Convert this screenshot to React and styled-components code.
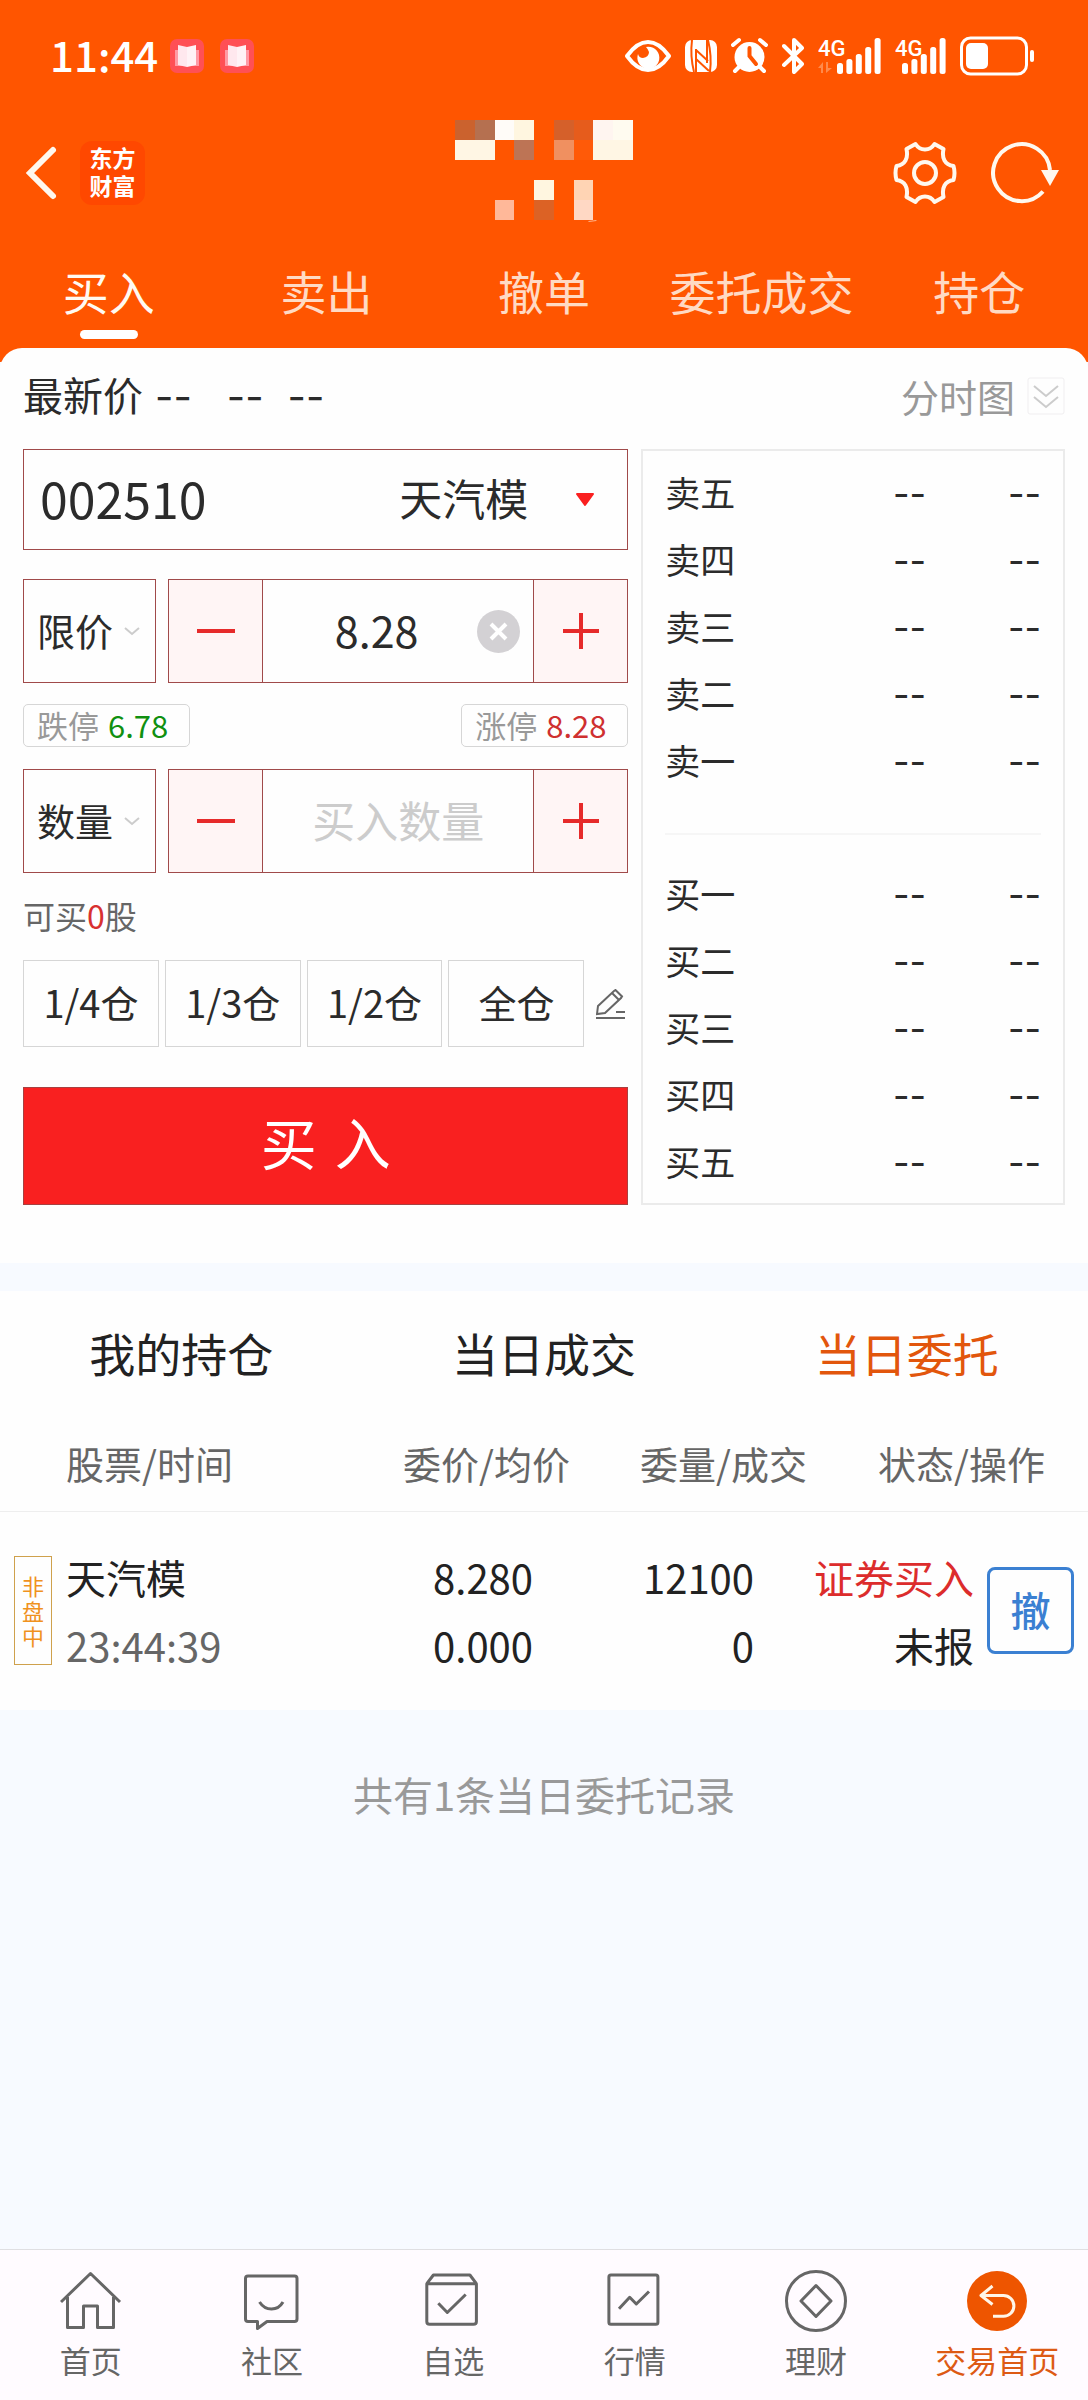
import React, { useState } from 'react';
import styled, { createGlobalStyle } from 'styled-components';

const topTabs = ['买入', '卖出', '撤单', '委托成交', '持仓'];
const sellLevels = ['卖五', '卖四', '卖三', '卖二', '卖一'];
const buyLevels = ['买一', '买二', '买三', '买四', '买五'];
const positions = ['1/4仓', '1/3仓', '1/2仓', '全仓'];
const orderTabs = ['我的持仓', '当日成交', '当日委托'];

const orders = [
  {
    id: 1,
    tag: '非盘中',
    name: '天汽模',
    time: '23:44:39',
    price: '8.280',
    average: '0.000',
    amount: '12100',
    done: '0',
    side: '证券买入',
    status: '未报',
  },
];

// [列, 行, 颜色]
const mosaicCells = [
  [0, 0, '#cb622e'],
  [1, 0, '#b57050'],
  [2, 0, '#fffcf8'],
  [3, 0, '#fff6e0'],
  [5, 0, '#d5602a'],
  [6, 0, '#e65c1c'],
  [7, 0, '#fff5f0'],
  [8, 0, '#fffbf0'],
  [0, 1, '#fff6e4'],
  [1, 1, '#fff6e4'],
  [3, 1, '#bd7455'],
  [5, 1, '#f09060'],
  [6, 1, '#ff5a08'],
  [7, 1, '#fff6e4'],
  [8, 1, '#fff6e4'],
  [4, 3, '#fff6e0'],
  [6, 3, '#ffd4b4'],
  [2, 4, '#ffb899'],
  [4, 4, '#dc6225'],
  [6, 4, '#ffd8c4'],
];

const navItems = [
  {
    label: '首页',
    icon: (
      <path d="M1 32 30.5 3.5 60 32M7.5 27V57.5H23.5V36H37.5V57.5H53.5V27" />
    ),
  },
  {
    label: '社区',
    icon: (
      <>
        <path d="M7 6H53.5Q56 6 56 8.5V49Q56 51.500 53.5 51.5H26L16.5 58.5V51.5H7Q4.5 51.5 4.5 49V8.5Q4.5 6 7 6Z" />
        <path d="M18.5 32Q23 39 30.5 39T42 32" />
      </>
    ),
  },
  {
    label: '自选',
    icon: (
      <>
        <path d="M4.8 13.7H54.4V51.5Q54.4 54.3 51.5 54.3H7.6Q4.8 54.3 4.8 51.5ZM4.8 13.7 11.4 5H47.9L54.4 13.7" />
        <path d="M16.3 33.3 25.3 42.5 43.7 24.5" />
      </>
    ),
  },
  {
    label: '行情',
    icon: (
      <>
        <rect x="4.9" y="5" width="49" height="49.3" rx="2" />
        <path d="M15 38.7 25.7 27.3 32.3 34 45 21.5" />
      </>
    ),
  },
  {
    label: '理财',
    icon: (
      <>
        <circle cx="31" cy="31" r="29.5" />
        <path d="M31 15.5 46 31 31 46.5 16 31Z" />
      </>
    ),
  },
  {
    label: '交易首页',
    active: true,
    icon: (
      <>
        <circle cx="31" cy="31" r="30" fill="#ee5500" stroke="none" />
        <path
          d="M26.5 16 15 25.5 26.5 34.5M15 25.5H37.5A10.4 10.4 0 0 1 37.5 46.3H27"
          stroke="#fff6e8"
        />
      </>
    ),
  },
];

function BookIcon() {
  return (
    <svg width="34" height="34" viewBox="0 0 34 34" aria-hidden="true">
      <rect width="34" height="34" rx="7" fill="#ff5055" />
      <path d="M5 11H29V27H5Z" fill="#ff9aa5" />
      <path d="M8 6 17 8V28L8 26Z" fill="#ffe8ee" />
      <path d="M26 6 17 8V28L26 26Z" fill="#fff3f6" />
    </svg>
  );
}

function SignalIcon({ bars, width, data }) {
  return (
    <svg
      width={width}
      height="44"
      viewBox={`0 -3 ${width} 44`}
      fill="#fff"
      fontFamily="Roboto, sans-serif"
    >
      <text x="0" y="19" fontSize="22" fontWeight="500">
        4G
      </text>
      {data && (
        <path d="M0 31 5 25V36H3V31ZM8 25H10V31H14L8 36Z" fill="#ff8a4c" />
      )}
      {[11, 15, 20, 27, 36].map((height, i) => (
        <rect
          key={height}
          x={bars + i * 9.4}
          y={37 - height}
          width="6"
          height={height}
          rx="2.5"
        />
      ))}
    </svg>
  );
}

function StatusIcons() {
  return (
    <StatusGroup $gap={14}>
      <svg width="46" height="38" viewBox="0 0 46 38" fill="none">
        <path
          d="M2 19Q12 5 23 5T44 19Q34 33 23 33T2 19Z"
          stroke="#fff"
          strokeWidth="4"
          strokeLinejoin="round"
        />
        <path
          d="M21 10A11 11 0 1 1 13 17Q14 21 18 21 24 20 24 15 23 12 21 10Z"
          fill="#fff"
        />
      </svg>
      <svg width="32" height="38" viewBox="0 0 32 38">
        <rect y="3" width="32" height="32" rx="7" fill="#fff" />
        <path
          d="M7 3Q5 19 9 35M25 35Q27 19 23 3M11 12V35M11 13 23 24M11 22 24 34M22 3V26"
          stroke="#ff5500"
          strokeWidth="2"
          fill="none"
        />
      </svg>
      <svg width="37" height="38" viewBox="0 0 37 38" fill="none">
        <circle cx="18.5" cy="20" r="15" fill="#fff" />
        <path
          d="M2 8 8 3M35 8 29 3M8 30 4 34M29 30 33 34"
          stroke="#fff"
          strokeWidth="4"
          strokeLinecap="round"
        />
        <path
          d="M18.5 11V19L25 27"
          stroke="#ff5500"
          strokeWidth="4"
          strokeLinecap="round"
        />
      </svg>
      <svg width="22" height="38" viewBox="0 0 22 38" fill="none">
        <path
          d="M2 9 20 27 12 35V3L20 11 2 28"
          stroke="#fff"
          strokeWidth="4"
          strokeLinejoin="round"
          strokeLinecap="round"
        />
      </svg>
      <SignalIcon bars={19} width={63} data />
      <SignalIcon bars={7} width={51} />
      <svg width="75" height="40" viewBox="0 0 75 40" fill="none">
        <rect
          x="1.5"
          y="2"
          width="65"
          height="36"
          rx="9"
          stroke="#fff"
          strokeWidth="3"
        />
        <rect x="6" y="7" width="22" height="26" rx="5" fill="#fff" />
        <rect x="70" y="14" width="4" height="12" rx="2" fill="#fff" />
      </svg>
    </StatusGroup>
  );
}

function Mosaic() {
  return (
    <svg
      width="178"
      height="106"
      viewBox="0 0 180 106"
      preserveAspectRatio="none"
      aria-hidden="true"
    >
      {mosaicCells.map(([col, row, color]) => (
        <rect
          key={`${col}-${row}`}
          x={col * 20}
          y={row * 20}
          width="20"
          height="20"
          fill={color}
          shapeRendering="crispEdges"
        />
      ))}
      <path d="M135 101.5 143 100.5" stroke="#ffb48c" />
    </svg>
  );
}

function GearIcon() {
  return (
    <svg width="64" height="64" viewBox="0 0 64 64" fill="none">
      <path
        d="M22.5 3Q26 8.5 32 8.5T41.5 3L50.5 8Q49 15 51.5 19.5 54 24 60.5 25Q62.5 32 60.5 39 54 40 51.5 44.5 49 49 50.5 56L41.5 61Q38 55.5 32 55.5T22.5 61L13.5 56Q15 49 12.5 44.5 10 40 3.5 39 1.5 32 3.5 25 10 24 12.5 19.5 15 15 13.5 8Z"
        stroke="#fff8ee"
        strokeWidth="4"
        strokeLinejoin="round"
      />
      <circle cx="32" cy="32" r="11" stroke="#fff8ee" strokeWidth="4" />
    </svg>
  );
}

function RefreshIcon() {
  return (
    <svg width="68" height="64" viewBox="0 0 68 64" fill="none">
      <path
        d="M52 50.5A28.5 28.5 0 1 1 59 29"
        stroke="#fff8ee"
        strokeWidth="4"
      />
      <path d="M50 29H68L59 45Z" fill="#fff8ee" />
    </svg>
  );
}

function SmallChevron() {
  return (
    <ChevronStyle viewBox="0 0 16 10" aria-hidden="true">
      <path d="M1 2 8 8 15 2" fill="none" stroke="#ccc" strokeWidth="2" />
    </ChevronStyle>
  );
}

function SignButton({ plus, label }) {
  return (
    <StepButton type="button" aria-label={label}>
      <svg width="38" height="38" viewBox="0 0 38 38">
        <path
          d={plus ? 'M1 19H37M19 1V37' : 'M0 19H38'}
          stroke="#e62a2a"
          strokeWidth="4"
        />
      </svg>
    </StepButton>
  );
}

function Levels({ rows, label }) {
  return (
    <LevelTable aria-label={label}>
      <tbody>
        {rows.map((row) => (
          <LevelRow key={row}>
            <LevelName scope="row">{row}</LevelName>
            <LevelValue>--</LevelValue>
            <LevelValue>--</LevelValue>
          </LevelRow>
        ))}
      </tbody>
    </LevelTable>
  );
}

function OrderForm() {
  const [code, setCode] = useState('002510');
  const [price, setPrice] = useState('8.28');
  const [amount, setAmount] = useState('');

  return (
    <Form onSubmit={(e) => e.preventDefault()}>
      <CodeBox>
        <CodeInput
          aria-label="股票代码"
          value={code}
          onChange={(e) => setCode(e.target.value)}
        />
        <StockName>天汽模</StockName>
        <PlainButton type="button" aria-label="选择股票">
          <svg width="20" height="14" viewBox="0 0 20 14">
            <path
              d="M2 1H18L10 12Z"
              fill="#fa2020"
              stroke="#fa2020"
              strokeWidth="2"
              strokeLinejoin="round"
            />
          </svg>
        </PlainButton>
      </CodeBox>

      <FieldRow>
        <SelectBox>
          <Select aria-label="委托方式">
            <option>限价</option>
          </Select>
          <SmallChevron />
        </SelectBox>
        <Stepper>
          <SignButton label="减价" />
          <StepField>
            <StepInput
              aria-label="委托价格"
              value={price}
              onChange={(e) => setPrice(e.target.value)}
            />
            <PlainButton
              type="button"
              aria-label="清空"
              onClick={() => setPrice('')}
            >
              <svg width="43" height="43" viewBox="0 0 43 43">
                <circle cx="21.5" cy="21.5" r="21.5" fill="#d3d1d4" />
                <path
                  d="M14 14 29 29M29 14 14 29"
                  stroke="#fff"
                  strokeWidth="4"
                />
              </svg>
            </PlainButton>
          </StepField>
          <SignButton plus label="加价" />
        </Stepper>
      </FieldRow>

      <LimitRow>
        <LimitPill>
          跌停<LimitValue $color="#109010">6.78</LimitValue>
        </LimitPill>
        <LimitPill>
          涨停<LimitValue $color="#cf3030">8.28</LimitValue>
        </LimitPill>
      </LimitRow>

      <FieldRow>
        <SelectBox>
          <Select aria-label="委托单位">
            <option>数量</option>
          </Select>
          <SmallChevron />
        </SelectBox>
        <Stepper>
          <SignButton label="减少数量" />
          <StepField>
            <StepInput
              aria-label="买入数量"
              placeholder="买入数量"
              value={amount}
              onChange={(e) => setAmount(e.target.value)}
            />
          </StepField>
          <SignButton plus label="增加数量" />
        </Stepper>
      </FieldRow>

      <Available>
        可买<em>0</em>股
      </Available>

      <PositionRow>
        {positions.map((item) => (
          <PositionButton key={item} type="button">
            {item}
          </PositionButton>
        ))}
        <EditButton type="button" aria-label="编辑仓位">
          <svg
            width="30"
            height="30"
            viewBox="0 0 30 30"
            fill="none"
            stroke="#666"
            strokeWidth="2"
          >
            <path d="M0 29H29M20 23H29M1 25 2 17 18 2 19.5 1 26 7.5 25 9 9 24ZM16 4 23 11" />
          </svg>
        </EditButton>
      </PositionRow>

      <BuyButton type="submit">
        <span>买</span>
        <span>入</span>
      </BuyButton>
    </Form>
  );
}

function App() {
  return (
    <Page>
      <GlobalStyle />
      <Header>
        <StatusBar>
          <StatusGroup $gap={16}>
            <Clock>11:44</Clock>
            <BookIcon />
            <BookIcon />
          </StatusGroup>
          <StatusIcons />
        </StatusBar>
        <TitleBar>
          <TitleLeft>
            <PlainButton type="button" aria-label="返回">
              <svg width="34" height="56" viewBox="0 0 34 56" fill="none">
                <path
                  d="M29 5 6 28 29 51"
                  stroke="#fff8ee"
                  strokeWidth="6"
                  strokeLinecap="round"
                />
              </svg>
            </PlainButton>
            <Logo>
              东方
              <br />
              财富
            </Logo>
          </TitleLeft>
          <Mosaic />
          <TitleRight>
            <PlainButton type="button" aria-label="设置">
              <GearIcon />
            </PlainButton>
            <PlainButton type="button" aria-label="刷新">
              <RefreshIcon />
            </PlainButton>
          </TitleRight>
        </TitleBar>
        <TopTabs>
          {topTabs.map((tab, i) => (
            <TopTab key={tab} type="button" $active={i === 0}>
              {tab}
            </TopTab>
          ))}
        </TopTabs>
      </Header>

      <TradeCard>
        <QuoteRow>
          <Quote>
            最新价
            <Dash $space={12}>--</Dash>
            <Dash $space={35}>--</Dash>
            <Dash $space={24}>--</Dash>
          </Quote>
          <ChartToggle type="button">
            分时图
            <svg width="38" height="38" viewBox="0 0 38 38" fill="none">
              <rect
                x="1"
                y="1"
                width="36"
                height="36"
                rx="2"
                stroke="#f0eef0"
              />
              <path
                d="M7 9 19 19 31 9M7 20 19 30 31 20"
                stroke="#ccc"
                strokeWidth="2"
              />
            </svg>
          </ChartToggle>
        </QuoteRow>
        <TradeBody>
          <OrderForm />
          <OrderBook>
            <Levels rows={sellLevels} label="卖盘" />
            <Divider />
            <Levels rows={buyLevels} label="买盘" />
          </OrderBook>
        </TradeBody>
      </TradeCard>

      <OrderSection>
        <OrderTabs>
          {orderTabs.map((tab, i) => (
            <OrderTab key={tab} type="button" $active={i === 2}>
              {tab}
            </OrderTab>
          ))}
        </OrderTabs>
        <OrderTable>
          <colgroup>
            <Col $width={66} />
            <col />
            <Col $width={237} />
            <Col $width={237} />
            <Col $width={167} />
            <Col $width={114} />
          </colgroup>
          <thead>
            <tr>
              <td />
              <HeadCell $align="left">股票/时间</HeadCell>
              <HeadCell>委价/均价</HeadCell>
              <HeadCell>委量/成交</HeadCell>
              <HeadCell colSpan={2} $right={43}>
                状态/操作
              </HeadCell>
            </tr>
          </thead>
          <tbody>
            {orders.map((order) => (
              <tr key={order.id}>
                <OrderCell>
                  <SessionTag>{order.tag}</SessionTag>
                </OrderCell>
                <OrderCell $align="left">
                  {order.name}
                  <Muted>{order.time}</Muted>
                </OrderCell>
                <OrderCell $right={37}>
                  {order.price}
                  <br />
                  {order.average}
                </OrderCell>
                <OrderCell $right={53}>
                  {order.amount}
                  <br />
                  {order.done}
                </OrderCell>
                <OrderCell>
                  <Side>{order.side}</Side>
                  {order.status}
                </OrderCell>
                <OrderCell $right={14}>
                  <CancelButton type="button">撤</CancelButton>
                </OrderCell>
              </tr>
            ))}
          </tbody>
        </OrderTable>
      </OrderSection>

      <Summary>共有1条当日委托记录</Summary>

      <BottomNav>
        {navItems.map((item) => (
          <NavLink key={item.label} href="#" $active={item.active}>
            <NavIcon viewBox="0 0 62 62">{item.icon}</NavIcon>
            {item.label}
          </NavLink>
        ))}
      </BottomNav>
    </Page>
  );
}

const GlobalStyle = createGlobalStyle`
  * {
    box-sizing: border-box;
  }

  body {
    margin: 0;
    background: #f7faff;
    color: #2b2b2b;
    font-family: 'Noto Sans CJK SC', 'Noto Sans', sans-serif;
  }

  button, input, select {
    padding: 0;
    border: 0;
    border-radius: 0;
    background: none;
    color: inherit;
    font-family: inherit;
  }

  svg {
    display: block;
    flex-shrink: 0;
  }
`;

const Page = styled.div`
  display: flex;
  flex-direction: column;
  min-height: 100vh;
`;

const PlainButton = styled.button`
  flex-shrink: 0;
  cursor: pointer;
`;

const Header = styled.header`
  padding-bottom: 23px;
  background: #ff5500;
  color: #fff;
`;

const StatusBar = styled.div`
  display: flex;
  align-items: center;
  justify-content: space-between;
  height: 112px;
  padding: 0 53px 0 50px;
`;

const StatusGroup = styled.div`
  display: flex;
  align-items: center;
  gap: ${({ $gap }) => $gap}px;
`;

const Clock = styled.time`
  margin-right: -4px;
  padding-bottom: 4px;
  font-size: 42px;
  font-weight: 500;
  line-height: 56px;
`;

const TitleBar = styled.div`
  display: grid;
  grid-template-columns: 1fr auto 1fr;
  align-items: center;
  height: 122px;
  padding: 0 24px;
`;

const TitleLeft = styled.div`
  display: flex;
  align-items: center;
  gap: 22px;
`;

const TitleRight = styled.div`
  display: flex;
  justify-content: flex-end;
  gap: 34px;
  padding-right: 5px;
`;

const Logo = styled.div`
  width: 65px;
  padding: 4px 0;
  border-radius: 12px;
  background: #ff4800;
  font-family: 'Liberation Sans', 'Noto Sans CJK SC', sans-serif;
  font-size: 23px;
  font-weight: 700;
  line-height: 28px;
  text-align: center;
`;

const TopTabs = styled.nav`
  display: grid;
  grid-template-columns: repeat(5, 1fr);
`;

const TopTab = styled.button`
  padding-top: 26px;
  color: ${({ $active }) => ($active ? '#fffaf2' : '#ffdac4')};
  font-size: 46px;
  line-height: 60px;
  cursor: pointer;

  &::after {
    display: block;
    width: 58px;
    height: 9px;
    margin: 10px auto 0;
    border-radius: 5px;
    background: ${({ $active }) => ($active ? '#fff' : 'transparent')};
    content: '';
  }
`;

// 白色卡片盖住橙色头部的下沿
const TradeCard = styled.section`
  margin-top: -14px;
  padding: 0 23px 58px;
  border-radius: 22px 22px 0 0;
  background: #fefefe;
`;

const QuoteRow = styled.div`
  display: flex;
  align-items: center;
  justify-content: space-between;
  height: 101px;
  padding-bottom: 6px;
`;

const Quote = styled.div`
  display: flex;
  align-items: baseline;
  font-size: 40px;
  line-height: 56px;
`;

const Dash = styled.span`
  margin-left: ${({ $space }) => $space}px;
  font-family: Inter, sans-serif;
`;

const ChartToggle = styled.button`
  display: flex;
  align-items: center;
  gap: 12px;
  color: #999;
  font-size: 38px;
  line-height: 56px;
  cursor: pointer;
`;

const TradeBody = styled.div`
  display: grid;
  grid-template-columns: 10fr 7fr;
  gap: 13px;
`;

const Form = styled.form`
  min-width: 0;
`;

const CodeBox = styled.div`
  display: flex;
  align-items: center;
  height: 101px;
  margin-bottom: 29px;
  padding: 0 32px 0 16px;
  border: 1px solid #a04a4a;
`;

const CodeInput = styled.input`
  flex: 1;
  min-width: 0;
  padding-bottom: 6px;
  font-size: 50px;
  line-height: 72px;
`;

const StockName = styled.span`
  margin-right: 47px;
  padding-bottom: 6px;
  font-size: 43px;
  line-height: 60px;
`;

const FieldRow = styled.div`
  display: flex;
  gap: 12px;
  height: 104px;
`;

const SelectBox = styled.div`
  position: relative;
  width: 133px;
  border: 1px solid #a04a4a;
`;

const Select = styled.select`
  width: 100%;
  height: 100%;
  padding: 0 0 4px 13px;
  appearance: none;
  font-size: 38px;
`;

const ChevronStyle = styled.svg`
  position: absolute;
  top: 46px;
  right: 15px;
  width: 16px;
  height: 10px;
  pointer-events: none;
`;

const Stepper = styled.div`
  display: flex;
  flex: 1;
  min-width: 0;
  border: 1px solid #a04a4a;
`;

const StepButton = styled.button`
  display: flex;
  align-items: center;
  justify-content: center;
  width: 93px;
  background: #fff5f5;
  cursor: pointer;
`;

const StepField = styled.div`
  display: flex;
  flex: 1;
  align-items: center;
  min-width: 0;
  padding: 0 13px;
  border: solid #a04a4a;
  border-width: 0 1px;
`;

const StepInput = styled.input`
  flex: 1;
  min-width: 0;
  padding-bottom: 4px;
  font-size: 43px;
  line-height: 60px;
  text-align: center;

  &::placeholder {
    color: #ccc;
    opacity: 1;
  }
`;

const LimitRow = styled.div`
  display: flex;
  justify-content: space-between;
  padding: 21px 0 22px;
`;

const LimitPill = styled.div`
  display: flex;
  gap: 9px;
  width: 167px;
  padding: 0 0 2px 13px;
  border: 1px solid #d6d6d6;
  border-radius: 5px;
  color: #999;
  font-size: 31px;
  line-height: 39px;
`;

const LimitValue = styled.span`
  color: ${({ $color }) => $color};
`;

const Available = styled.div`
  padding-bottom: 3px;
  color: #666;
  font-size: 32px;
  line-height: 84px;

  em {
    color: #d83030;
    font-style: normal;
  }
`;

const PositionRow = styled.div`
  display: flex;
  gap: 6px;
  height: 87px;
`;

const PositionButton = styled.button`
  flex: 1;
  min-width: 0;
  padding-bottom: 4px;
  border: 1px solid #d6d6d6;
  font-size: 38px;
  cursor: pointer;
`;

const EditButton = styled.button`
  display: flex;
  align-items: center;
  width: 38px;
  padding-left: 6px;
  cursor: pointer;
`;

const BuyButton = styled.button`
  display: flex;
  align-items: center;
  justify-content: center;
  gap: 18px;
  width: 100%;
  height: 118px;
  margin-top: 40px;
  padding-bottom: 12px;
  border: 1px solid #a84040;
  background: #f92020;
  color: #fff;
  font-size: 56px;
  cursor: pointer;
`;

const OrderBook = styled.div`
  padding: 9px 22px 0;
  border: 2px solid #ebebeb;
`;

const LevelTable = styled.table`
  width: 100%;
  border-collapse: collapse;
  line-height: 60px;
`;

const LevelRow = styled.tr`
  height: 67px;
  vertical-align: baseline;
`;

const LevelName = styled.th`
  padding: 2px 0 0;
  font-size: 35px;
  font-weight: 400;
  text-align: left;
`;

const LevelValue = styled.td`
  width: 115px;
  padding: 2px 0 0;
  font-family: Inter, sans-serif;
  font-size: 36px;
  text-align: right;
`;

const Divider = styled.hr`
  height: 2px;
  margin: 38px 0 26px;
  border: 0;
  background: #f6f6f6;
`;

const OrderSection = styled.section`
  margin-top: 28px;
  background: #fefefe;
`;

const OrderTabs = styled.div`
  display: grid;
  grid-template-columns: repeat(3, 1fr);
  height: 128px;
`;

const OrderTab = styled.button`
  padding-bottom: 6px;
  color: ${({ $active }) => ($active ? '#e2560c' : '#222')};
  font-size: 46px;
  cursor: pointer;
`;

const OrderTable = styled.table`
  width: 100%;
  border-collapse: collapse;
  table-layout: fixed;
`;

const Col = styled.col`
  width: ${({ $width }) => $width}px;
`;

const HeadCell = styled.th`
  height: 92px;
  padding: 0 ${({ $right = 0 }) => $right}px 3px 0;
  color: #666;
  font-size: 38px;
  font-weight: 400;
  line-height: 56px;
  text-align: ${({ $align = 'right' }) => $align};
`;

const OrderCell = styled.td`
  height: 199px;
  padding: 0 ${({ $right = 0 }) => $right}px 0 0;
  border-top: 1px solid #eee;
  color: #222;
  font-size: 40px;
  line-height: 68px;
  text-align: ${({ $align = 'right' }) => $align};
`;

const SessionTag = styled.div`
  width: 38px;
  margin-left: 14px;
  padding: 16px 7px;
  border: 1px solid #cfa14c;
  color: #f0921e;
  font-size: 22px;
  line-height: 25px;
  text-align: center;
  word-break: break-all;
`;

const Muted = styled.div`
  color: #666;
`;

const Side = styled.div`
  color: #dc2c2c;
`;

const CancelButton = styled.button`
  width: 87px;
  height: 87px;
  padding-bottom: 3px;
  border: 3px solid #3b80d2;
  border-radius: 8px;
  color: #3b80d2;
  font-size: 40px;
  font-weight: 500;
  cursor: pointer;
`;

const Summary = styled.p`
  flex: 1;
  margin: 0;
  padding-top: 54px;
  color: #999;
  font-size: 40px;
  line-height: 60px;
  text-align: center;
`;

const BottomNav = styled.nav`
  display: grid;
  grid-template-columns: repeat(6, 1fr);
  height: 151px;
  padding-top: 20px;
  border-top: 1px solid #dfdfe2;
  background: #fffbff;
`;

const NavLink = styled.a`
  display: flex;
  flex-direction: column;
  align-items: center;
  gap: 6px;
  color: ${({ $active }) => ($active ? '#dd5a14' : '#666')};
  font-size: 31px;
  line-height: 44px;
  text-decoration: none;
`;

const NavIcon = styled.svg`
  width: 62px;
  height: 62px;
  fill: none;
  stroke: #666;
  stroke-width: 3;
  stroke-linejoin: round;
`;

export default App;
